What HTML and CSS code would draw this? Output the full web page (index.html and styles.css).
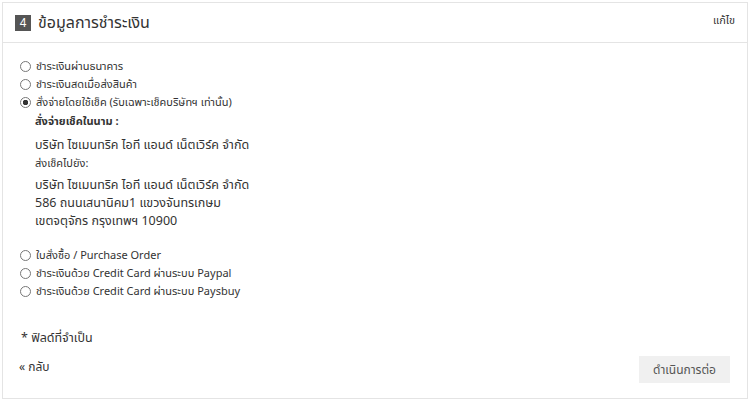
FILE: index.html
```html
<!DOCTYPE html>
<html lang="th">
<head>
    <meta charset="UTF-8">
    <meta name="viewport" content="width=device-width, initial-scale=1.0">
    <title>ข้อมูลการชำระเงิน</title>
    <link rel="stylesheet" href="styles.css">
</head>
<body>

    <div class="panel">
        <div class="panel-head">
            <h2><span class="step">4</span> ข้อมูลการชำระเงิน</h2>
            <a href="#" class="edit">แก้ไข</a>
        </div>

        <div class="panel-body">
            <label class="opt"><input type="radio" name="pay"> ชำระเงินผ่านธนาคาร</label>
            <label class="opt"><input type="radio" name="pay"> ชำระเงินสดเมื่อส่งสินค้า</label>
            <label class="opt"><input type="radio" name="pay" checked> สั่งจ่ายโดยใช้เช็ค (รับเฉพาะเช็คบริษัทฯ เท่านั้น)</label>

            <div class="cheque">
                <div class="cheque-label">สั่งจ่ายเช็คในนาม :</div>
                <div class="cheque-text">บริษัท ไซเมนทริค ไอที แอนด์ เน็ตเวิร์ค จำกัด</div>
                <div class="cheque-sub">ส่งเช็คไปยัง:</div>
                <div class="cheque-text">บริษัท ไซเมนทริค ไอที แอนด์ เน็ตเวิร์ค จำกัด<br>
                    586 ถนนเสนานิคม1 แขวงจันทรเกษม<br>
                    เขตจตุจักร กรุงเทพฯ 10900</div>
            </div>

            <label class="opt"><input type="radio" name="pay"> ใบสั่งซื้อ / Purchase Order</label>
            <label class="opt"><input type="radio" name="pay"> ชำระเงินด้วย Credit Card ผ่านระบบ Paypal</label>
            <label class="opt"><input type="radio" name="pay"> ชำระเงินด้วย Credit Card ผ่านระบบ Paysbuy</label>

            <p class="required">* ฟิลด์ที่จำเป็น</p>

            <div class="actions">
                <a href="#" class="back">« กลับ</a>
                <button class="next">ดำเนินการต่อ</button>
            </div>
        </div>
    </div>

</body>
</html>
```

FILE: styles.css
```css
body {
    margin: 0;
    padding: 2px 2px 0 2px;
    background: #fff;
    font-family: "Noto Sans Thai", "Noto Sans", "Liberation Sans", sans-serif;
    color: #333;
}
.panel {
    border: 1px solid #e4e4e4;
    height: 397px;
    box-sizing: border-box;
}
.panel-head {
    display: flex;
    justify-content: space-between;
    align-items: center;
    height: 39px;
    padding: 0 12px 0 12px;
    border-bottom: 1px solid #e4e4e4;
}
.panel-head h2 {
    margin: 0;
    font-size: 16px;
    font-weight: normal;
    color: #333;
    display: flex;
    align-items: center;
    gap: 7px;
}
.step {
    display: inline-block;
    width: 16px;
    height: 16px;
    line-height: 16px;
    background: #555;
    color: #fff;
    font-size: 12px;
    text-align: center;
    font-family: "Liberation Sans", sans-serif;
}
.edit {
    font-size: 11px;
    color: #333;
    text-decoration: none;
    margin-top: -4px;
}
.panel-body {
    padding: 14px 16px 0 16px;
    font-size: 11px;
}
.opt {
    display: flex;
    align-items: center;
    gap: 5px;
    height: 18px;
}
.opt input {
    appearance: none;
    margin: 0 0 0 1px;
    width: 11px;
    height: 11px;
    border: 1px solid #777;
    border-radius: 50%;
    box-sizing: border-box;
    background: #fff;
}
.opt input:checked {
    background: radial-gradient(circle, #333 0 2.5px, #fff 3px);
}
.cheque {
    padding: 2px 0 15px 16px;
}
.cheque-label {
    font-weight: bold;
    line-height: 18px;
}
.cheque-text {
    font-size: 12.5px;
    line-height: 18px;
    margin-top: 6px;
}
.cheque-sub {
    line-height: 18px;
}
.cheque-sub + .cheque-text {
    margin-top: 4px;
}
.required {
    font-size: 12.5px;
    line-height: 18px;
    margin: 30px 0 0 2px;
}
.actions {
    display: flex;
    justify-content: space-between;
    align-items: center;
    margin-top: 8px;
}
.back {
    color: #333;
    text-decoration: none;
    font-size: 12px;
    margin-top: -5px;
}
.next {
    background: #f0f0f0;
    border: none;
    color: #555;
    font-family: inherit;
    font-size: 12px;
    white-space: nowrap;
    width: 91px;
    height: 27px;
    padding: 0;
    margin-right: 1px;
}
```
